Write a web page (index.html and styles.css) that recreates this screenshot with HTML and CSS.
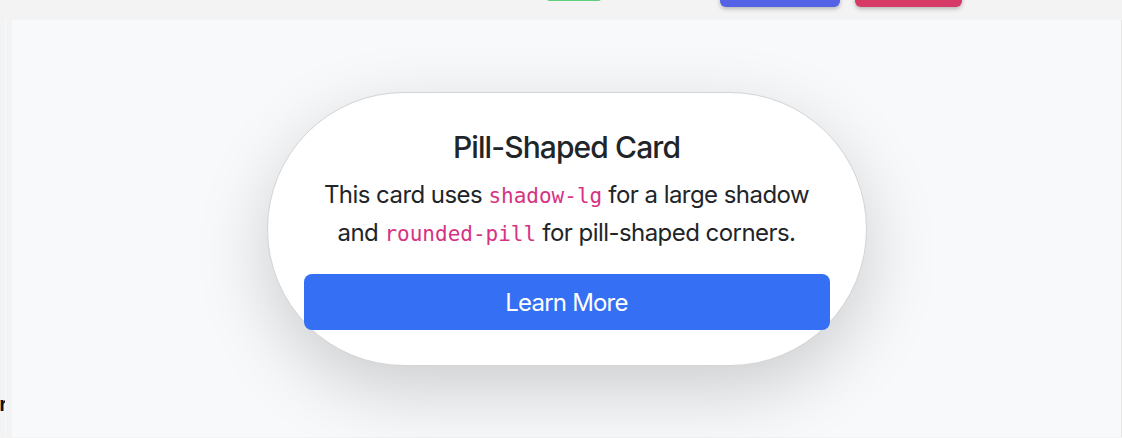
FILE: index.html
```html
<!DOCTYPE html>
<html>
<head>
<meta charset="utf-8">
<link rel="stylesheet" href="styles.css">
</head>
<body>
<header class="topbar">
  <span class="tb-green"></span>
  <span class="tb-btn tb-blue"></span>
  <span class="tb-btn tb-red"></span>
</header>
<div class="row">
  <div class="side"><span class="side-text">r</span></div>
  <main class="panel">
    <div class="stage">
      <div class="card">
        <h5 class="card-title">Pill-Shaped Card</h5>
        <p class="card-text">This card uses <code>shadow-lg</code> for a large shadow and <code>rounded-pill</code> for pill-shaped corners.</p>
        <a class="btn" href="#">Learn More</a>
      </div>
    </div>
  </main>
</div>
</body>
</html>
```
FILE: styles.css
```css
* { box-sizing: border-box; }
html, body { margin: 0; padding: 0; }
body {
  background: #f3f3f3;
  width: 1122px;
  height: 438px;
  overflow: hidden;
  font-family: Inter, "Liberation Sans", sans-serif;
  color: #212529;
}
.topbar {
  height: 20px;
  display: flex;
  align-items: flex-end;
  position: relative;
}
.tb-green {
  position: absolute;
  left: 547px;
  top: -4px;
  width: 54px;
  height: 5px;
  border-radius: 3px;
  background: #5fcf7c;
}
.tb-btn {
  position: absolute;
  top: -30px;
  height: 37px;
  border-radius: 6px;
  box-shadow: 0 2px 4px rgba(0,0,0,0.25);
}
.tb-blue { left: 720px; width: 120px; background: #5463e6; }
.tb-red { left: 855px; width: 107px; background: #d63a67; }
.row {
  display: flex;
  height: 418px;
}
.side {
  width: 5px;
  overflow: hidden;
  display: flex;
  align-items: flex-end;
  justify-content: flex-end;
  padding-bottom: 24px;
}
.side-text {
  font-family: "Liberation Sans", sans-serif;
  font-size: 20px;
  font-weight: bold;
  color: #111;
  line-height: 1;
  margin-right: -2px;
}
.panel {
  width: 1117px;
  height: 417px;
  background: #f2f3f4;
  border-left: 1px solid #fafafa;
  border-right: 1px solid #e4e4e4;
  padding-left: 6px;
  display: flex;
}
.stage {
  flex: 1;
  background: #f8f9fa;
  display: flex;
  align-items: center;
  justify-content: center;
}
.card {
  width: 600px;
  background: #fff;
  border: 1px solid #d3d4d5;
  border-radius: 150px;
  box-shadow: 0 24px 72px rgba(0,0,0,0.175);
  padding: 36px 36px 35px;
  text-align: center;
  margin-top: 1px;
}
.card-title {
  margin: 0 0 11px;
  font-size: 30px;
  font-weight: 500;
  line-height: 36px;
  letter-spacing: -0.9px;
}
.card-text {
  margin: 0 0 22px;
  font-size: 24px;
  line-height: 38px;
  letter-spacing: -0.55px;
}
code {
  font-family: "DejaVu Sans Mono", monospace;
  font-size: 21px;
  line-height: 1;
  letter-spacing: 0;
  color: #d63384;
}
.btn {
  display: block;
  height: 56px;
  padding-top: 2px;
  line-height: 54px;
  border-radius: 8px;
  background: #346ff4;
  color: #fff;
  font-size: 24px;
  letter-spacing: -0.8px;
  text-decoration: none;
}
```
